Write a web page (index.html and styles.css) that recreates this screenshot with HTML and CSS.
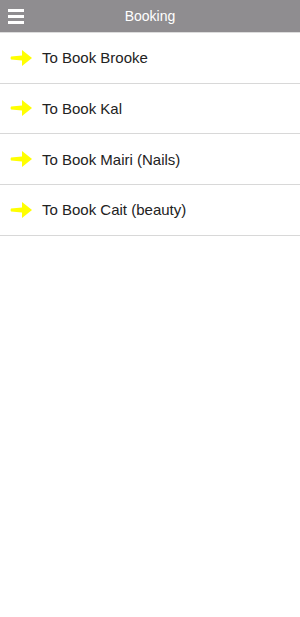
FILE: index.html
```html
<!DOCTYPE html>
<html lang="en">
<head>
    <meta charset="UTF-8">
    <meta name="viewport" content="width=device-width, initial-scale=1.0">
    <title>Booking</title>
    <link rel="stylesheet" href="styles.css">
</head>
<body>

<header class="top-bar">
    <button class="menu-btn" aria-label="Menu">
        <span></span><span></span><span></span>
    </button>
    <h1>Booking</h1>
</header>

<ul class="booking-list">
    <li>
        <svg class="arrow-icon" viewBox="0 0 22 16"><path d="M1 6.5 Q0 8 1 9.5 L12 10.5 L12 16 L22 8 L12 0 L12 5.5 Z" fill="#ffff00"/></svg>
        <span>To Book Brooke</span>
    </li>
    <li>
        <svg class="arrow-icon" viewBox="0 0 22 16"><path d="M1 6.5 Q0 8 1 9.5 L12 10.5 L12 16 L22 8 L12 0 L12 5.5 Z" fill="#ffff00"/></svg>
        <span>To Book Kal</span>
    </li>
    <li>
        <svg class="arrow-icon" viewBox="0 0 22 16"><path d="M1 6.5 Q0 8 1 9.5 L12 10.5 L12 16 L22 8 L12 0 L12 5.5 Z" fill="#ffff00"/></svg>
        <span>To Book Mairi (Nails)</span>
    </li>
    <li>
        <svg class="arrow-icon" viewBox="0 0 22 16"><path d="M1 6.5 Q0 8 1 9.5 L12 10.5 L12 16 L22 8 L12 0 L12 5.5 Z" fill="#ffff00"/></svg>
        <span>To Book Cait (beauty)</span>
    </li>
</ul>

</body>
</html>
```

FILE: styles.css
```css
body {
    margin: 0;
    background: #fff;
    font-family: "Liberation Sans", Arial, sans-serif;
}

/* Top bar */
.top-bar {
    position: relative;
    height: 32px;
    background-color: #8f8d90;
    border-bottom: 1px solid #dcdcdc;
    display: flex;
    align-items: center;
    justify-content: center;
}

.top-bar h1 {
    margin: 0;
    font-size: 14px;
    font-weight: normal;
    color: #fff;
}

.menu-btn {
    position: absolute;
    left: 8px;
    top: 9px;
    padding: 0;
    border: none;
    background: none;
    display: flex;
    flex-direction: column;
    gap: 3px;
}

.menu-btn span {
    display: block;
    width: 16px;
    height: 3px;
    background: #fff;
}

/* List */
.booking-list {
    list-style: none;
    margin: 0;
    padding: 0;
}

.booking-list li {
    height: 49.67px;
    display: flex;
    align-items: center;
    padding-left: 10px;
    border-bottom: 1px solid #d8d8d8;
    font-size: 15px;
    color: #222;
}

.arrow-icon {
    width: 22px;
    height: 16px;
    margin-right: 10px;
}
```
